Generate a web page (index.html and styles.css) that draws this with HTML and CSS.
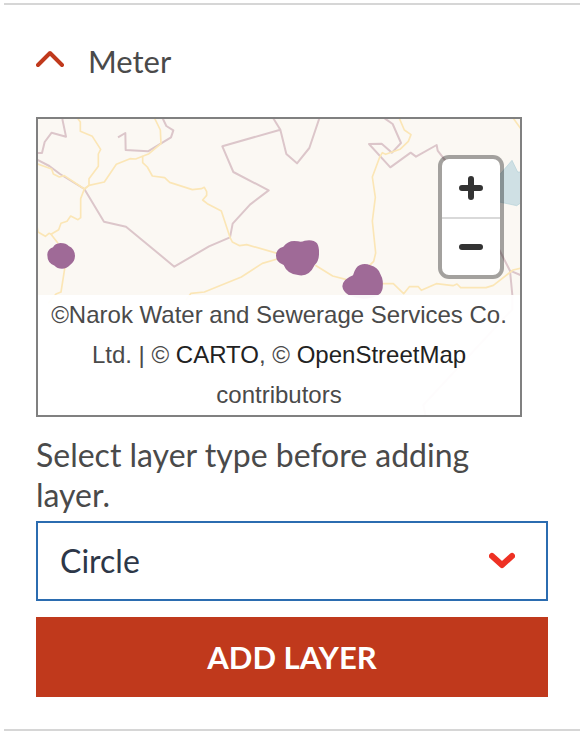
FILE: index.html
```html
<!DOCTYPE html>
<html lang="en">
<head>
  <meta charset="UTF-8">
  <meta name="viewport" content="width=device-width, initial-scale=1">
  <title>Meter</title>
  <link rel="stylesheet" href="styles.css">
</head>
<body>
  <section class="panel">
    <button type="button" class="panel-toggle" aria-expanded="true">
      <svg class="chevron-up" viewBox="0 0 28 22" aria-hidden="true"><path d="M2 15 14 3l12 12"/></svg>
      Meter
    </button>

    <div class="map">
      <!-- three units per map pixel -->
      <svg class="map-canvas" viewBox="24 27 1446 888" preserveAspectRatio="xMidYMid slice" aria-hidden="true">
        <path class="water" d="M1408 195 1446 151 1463 186 1475 186V277L1460 287 1408 276Z"/>
        <g class="boundary">
          <path d="M97 27 108 80 65 68 44 96 36 129H20"/>
          <path d="M264 82 286 69 287 120 354 124 423 82 430 61 409 48 398 25"/>
          <path d="M20 148 58 168 90 192 163 237 222 335 288 350 433 470 537 409 600 382 608 341 660 284 716 241 610 186 577 109 751 59 769 132 801 160 838 114 868 25"/>
          <path d="M751 59 730 25"/>
          <path d="M1064 25 1088 42 1113 99 1086 128 1055 101 1017 102 1081 172 1142 128 1158 140 1220 105 1223 122 1260 170 1408 420 1440 482 1475 497"/>
          <path d="M1440 482 1447 555V598L1180 885 1186 915"/>
        </g>
        <g class="road">
          <path d="M143 25 151 36V64L187 79 212 118 205 132V169L177 206V226L163 237 152 266V323L144 329 122 318 111 334 93 340 86 359 63 373 84 400M105 470 93 546 78 552 55 580"/>
          <path d="M20 161 65 177 70 192 88 201 103 197 163 237 177 226 223 216 259 163 300 146 317 147 357 131 393 101 391 60 374 25"/>
          <path d="M338 137V158L352 171 367 198 404 203 419 217 487 239 514 236 523 232 530 245 530 256 518 270 532 281 574 303 600 382 607 396 629 407 650 404 742 430M856 466 908 498 950 509"/>
          <path d="M20 342 24 366 46 379 57 370 67 374"/>
          <path d="M742 447 697 460 634 501 523 546 483 550 468 570"/>
          <path d="M1108 25 1123 60 1143 74 1135 94 1110 118 1067 133 1057 128 1049 142 1027 201 1036 262 1027 333 1037 429 1031 454 1015 470"/>
          <path d="M1055 521H1090L1121 551 1138 530H1165L1174 541 1219 521 1269 527 1281 522 1292 533H1368L1390 526 1449 480 1475 474"/>
          <path d="M1450 25 1475 60"/>
        </g>
        <g class="meter">
          <path d="M52 433Q54 416 69 412 75 400 91 399 109 399 116 408 134 416 135 438 134 456 121 464 110 476 96 476 81 476 74 467 51 460 52 433Z"/>
          <path d="M738 437Q738 416 760 410 776 388 804 394 814 397 824 392 850 387 861 400 868 410 867 434 866 454 854 465 838 500 808 496 772 494 761 465 738 456 738 437Z"/>
          <path d="M937 529Q938 508 969 496 976 470 990 465 1005 458 1021 466 1044 471 1052 494 1061 510 1058 534 1054 565 1000 566 941 561 937 529Z"/>
        </g>
      </svg>
      <div class="zoom">
        <button type="button" class="zoom-button" aria-label="Zoom in">
          <svg class="zoom-icon" viewBox="0 0 24 24" aria-hidden="true"><path d="M3 12h18M12 3v18"/></svg>
        </button>
        <button type="button" class="zoom-button" aria-label="Zoom out">
          <svg class="zoom-icon" viewBox="0 0 24 24" aria-hidden="true"><path d="M3 12h18"/></svg>
        </button>
      </div>
      <div class="attribution">
        ©Narok Water and Sewerage Services Co. Ltd. | © <a href="#">CARTO</a>, © <a href="#">OpenStreetMap</a> contributors
      </div>
    </div>

    <label class="hint" for="layerType">Select layer type before adding layer.</label>
    <div class="select-box">
      <select id="layerType" class="select">
        <option>Circle</option>
      </select>
      <svg class="chevron-down" viewBox="0 0 26 18" aria-hidden="true"><path d="M3 4 13 13 23 4"/></svg>
    </div>

    <button type="button" class="add-button">ADD LAYER</button>
  </section>
</body>
</html>
```

FILE: styles.css
```css
* {
  box-sizing: border-box;
}
body {
  margin: 0;
  padding: 3px 4px;
  background: #fff;
  color: #4a4a4a;
  font-family: Lato, "Open Sans", sans-serif;
  font-size: 32px;
  line-height: 40px;
}
button,
select {
  margin: 0;
  border: 0;
  font: inherit;
  cursor: pointer;
}
.panel {
  display: flex;
  flex-direction: column;
  padding: 36px 32px 32px;
  border-top: 2px solid #d6d6d6;
  border-bottom: 2px solid #d6d6d6;
}
.panel-toggle {
  display: flex;
  align-items: center;
  gap: 24px;
  padding: 0;
  background: none;
  color: inherit;
  font-size: 31px;
}
.chevron-up,
.chevron-down {
  width: 28px;
  fill: none;
  stroke: #c0391c;
  stroke-width: 4;
  stroke-linecap: round;
  stroke-linejoin: round;
}

.map {
  position: relative;
  display: flex;
  align-items: flex-end;
  min-height: 300px;
  margin: 36px 26px 18px 0;
  border: 2px solid #808080;
  background: #fbf8f3;
  overflow: hidden;
}
.map-canvas {
  position: absolute;
  inset: 0;
  width: 100%;
  height: 100%;
}
.water {
  fill: #cfe0e4;
  stroke: #b4d0d8;
  stroke-width: 2;
}
.boundary,
.road {
  fill: none;
  stroke: #dcc6ca;
  stroke-width: 6;
  stroke-linejoin: round;
}
.road {
  stroke: #fbe6b6;
  stroke-width: 5;
}
.meter {
  fill: #9f6a97;
}
.zoom {
  position: absolute;
  top: 36px;
  right: 16px;
  display: flex;
  flex-direction: column;
  border: 4px solid rgba(0, 0, 0, 0.35);
  border-radius: 11px;
  background: #fff;
  background-clip: padding-box;
}
.zoom-button {
  display: grid;
  place-items: center;
  width: 58px;
  height: 58px;
  padding: 0;
  background: none;
}
.zoom-button + .zoom-button {
  border-top: 2px solid #d9d9d9;
}
.zoom-icon {
  width: 24px;
  fill: none;
  stroke: #333;
  stroke-width: 6;
  stroke-linecap: round;
}
.attribution {
  position: relative;
  flex: 1;
  padding: 0 10px;
  background: rgba(255, 255, 255, 0.95);
  font-family: "Liberation Sans", Arial, sans-serif;
  font-size: 24px;
  text-align: center;
}
.attribution a {
  color: #222;
  text-decoration: none;
}

.hint {
  margin-bottom: 6px;
}
.select-box {
  position: relative;
}
.select {
  display: block;
  width: 100%;
  height: 80px;
  padding: 0 64px 0 22px;
  border: 2px solid #2b6cb0;
  border-radius: 0;
  background: #fff;
  color: #2d3748;
  appearance: none;
}
.chevron-down {
  position: absolute;
  top: 31px;
  right: 33px;
  width: 26px;
  stroke: #ee3124;
  stroke-width: 6;
  pointer-events: none;
}
.add-button {
  height: 80px;
  margin-top: 16px;
  background: #c0391c;
  color: #fff;
  font-size: 31px;
  font-weight: bold;
}
```
